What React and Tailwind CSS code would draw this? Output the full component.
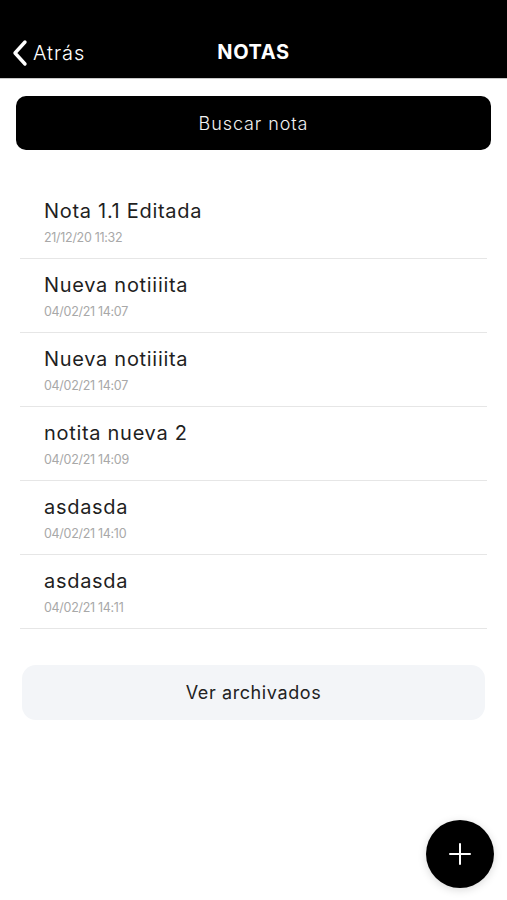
import React from 'react';

const notes = [
  { title: 'Nota 1.1 Editada', date: '21/12/20 11:32' },
  { title: 'Nueva notiiiita', date: '04/02/21 14:07' },
  { title: 'Nueva notiiiita', date: '04/02/21 14:07' },
  { title: 'notita nueva 2', date: '04/02/21 14:09' },
  { title: 'asdasda', date: '04/02/21 14:10' },
  { title: 'asdasda', date: '04/02/21 14:11' },
];

const App = () => {
  return (
    <div className="relative h-[900px] w-full overflow-hidden bg-white font-['Inter',sans-serif] text-[#1a1a1a]">
      <header className="relative flex h-[79px] items-end border-b border-[#c8c8c8] bg-black pb-[10px]">
        <button className="flex items-center pl-[10px] text-white">
          <svg width="22" height="28" viewBox="0 0 22 28" fill="none">
            <path d="M15 3 L5 14 L15 25" stroke="white" strokeWidth="3.4" strokeLinecap="round" strokeLinejoin="round" />
          </svg>
          <span className="ml-[1px] text-[20px] font-light tracking-[0.9px]">Atrás</span>
        </button>
        <h1 className="pointer-events-none absolute bottom-[11px] left-0 right-0 text-center text-[20px] font-bold tracking-[0.6px] text-white">
          NOTAS
        </h1>
      </header>

      <div className="px-[16px] pt-[17px]">
        <button className="flex h-[54px] w-full items-center justify-center rounded-[10px] bg-black text-[18px] font-light tracking-[0.9px] text-[#f2f2f2]">
          Buscar nota
        </button>
      </div>

      <ul className="mx-[20px] mt-[35px]">
        {notes.map((n, i) => (
          <li key={i} className="flex h-[74px] flex-col justify-center border-b border-[#e6e6e6] pl-[24px] pt-[1px]">
            <span className="text-[20px] leading-[24px] tracking-[0.7px] text-[#1f1f1f]">{n.title}</span>
            <span className="mt-[7px] text-[12.5px] leading-[16px] tracking-[-0.3px] text-[#a8a8a8]">{n.date}</span>
          </li>
        ))}
      </ul>

      <div className="px-[22px] pt-[36px]">
        <button className="flex h-[55px] w-full items-center justify-center rounded-[14px] bg-[#f3f5f8] text-[18px] tracking-[0.6px] text-[#222]">
          Ver archivados
        </button>
      </div>

      <button className="absolute left-[426px] top-[820px] flex h-[68px] w-[68px] items-center justify-center rounded-full bg-black shadow-[0_2px_8px_rgba(0,0,0,0.15)]">
        <svg width="24" height="24" viewBox="0 0 24 24" fill="none">
          <path d="M12 2 V22 M2 12 H22" stroke="white" strokeWidth="2" strokeLinecap="round" />
        </svg>
      </button>
    </div>
  );
};

export default App;
